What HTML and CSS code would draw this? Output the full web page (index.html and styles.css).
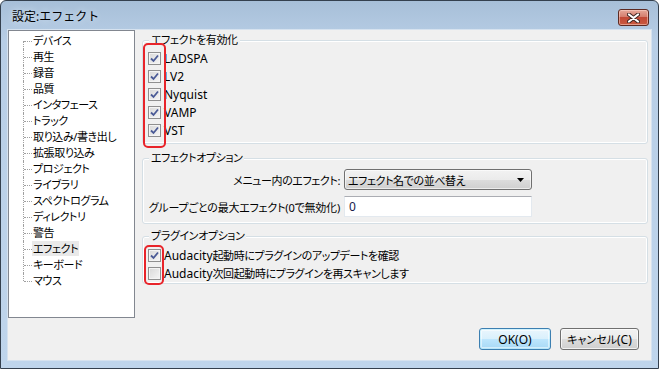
FILE: index.html
```html
<!DOCTYPE html>
<html lang="ja">
<head>
    <meta charset="UTF-8">
    <title>設定:エフェクト</title>
    <link rel="stylesheet" href="styles.css">
</head>
<body>
    <div class="window">
        <div class="titlebar">
            <span class="title">設定:エフェクト</span>
            <button class="close">
                <svg width="13" height="10" viewBox="0 0 13 10">
                    <path d="M2 1.5 L11 8.5 M11 1.5 L2 8.5" stroke="#3c2420" stroke-width="4" stroke-linecap="round"/>
                    <path d="M2 1.5 L11 8.5 M11 1.5 L2 8.5" stroke="#ffffff" stroke-width="2.2" stroke-linecap="round"/>
                </svg>
            </button>
        </div>
        <div class="client">
            <div class="main">
                <ul class="tree">
                    <li>デバイス</li>
                    <li>再生</li>
                    <li>録音</li>
                    <li>品質</li>
                    <li>インタフェース</li>
                    <li>トラック</li>
                    <li>取り込み/書き出し</li>
                    <li>拡張取り込み</li>
                    <li>プロジェクト</li>
                    <li>ライブラリ</li>
                    <li>スペクトログラム</li>
                    <li>ディレクトリ</li>
                    <li>警告</li>
                    <li><span class="selected">エフェクト</span></li>
                    <li>キーボード</li>
                    <li>マウス</li>
                </ul>
                <div class="panel">
                    <div class="group group-enable">
                        <div class="group-title">エフェクトを有効化</div>
                        <div class="checks">
                            <div class="check"><span class="box"><svg width="11" height="11" viewBox="0 0 11 11"><path d="M2 5.5 L4.5 8 L9 2.5" fill="none" stroke="#4a5a96" stroke-width="1.8"/></svg></span><span class="latin">LADSPA</span></div>
                            <div class="check"><span class="box"><svg width="11" height="11" viewBox="0 0 11 11"><path d="M2 5.5 L4.5 8 L9 2.5" fill="none" stroke="#4a5a96" stroke-width="1.8"/></svg></span><span class="latin">LV2</span></div>
                            <div class="check"><span class="box"><svg width="11" height="11" viewBox="0 0 11 11"><path d="M2 5.5 L4.5 8 L9 2.5" fill="none" stroke="#4a5a96" stroke-width="1.8"/></svg></span><span class="latin">Nyquist</span></div>
                            <div class="check"><span class="box"><svg width="11" height="11" viewBox="0 0 11 11"><path d="M2 5.5 L4.5 8 L9 2.5" fill="none" stroke="#4a5a96" stroke-width="1.8"/></svg></span><span class="latin">VAMP</span></div>
                            <div class="check"><span class="box"><svg width="11" height="11" viewBox="0 0 11 11"><path d="M2 5.5 L4.5 8 L9 2.5" fill="none" stroke="#4a5a96" stroke-width="1.8"/></svg></span><span class="latin">VST</span></div>
                        </div>
                        <div class="mark mark-enable"></div>
                    </div>

                    <div class="group group-options">
                        <div class="group-title">エフェクトオプション</div>
                        <div class="form">
                            <span class="form-label">メニュー内のエフェクト:</span>
                            <div class="combo">
                                <span>エフェクト名での並べ替え</span>
                                <svg width="7" height="4" viewBox="0 0 7 4"><path d="M0 0 H7 L3.5 4 Z" fill="#000"/></svg>
                            </div>
                            <span class="form-label form-label-long">グループごとの最大エフェクト(0で無効化)</span>
                            <div class="field"><span class="latin">0</span></div>
                        </div>
                    </div>

                    <div class="group group-plugins">
                        <div class="group-title">プラグインオプション</div>
                        <div class="checks">
                            <div class="check"><span class="box"><svg width="11" height="11" viewBox="0 0 11 11"><path d="M2 5.5 L4.5 8 L9 2.5" fill="none" stroke="#4a5a96" stroke-width="1.8"/></svg></span><span><span class="latin">Audacity</span>起動時にプラグインのアップデートを確認</span></div>
                            <div class="check"><span class="box"></span><span><span class="latin">Audacity</span>次回起動時にプラグインを再スキャンします</span></div>
                        </div>
                        <div class="mark mark-plugins"></div>
                    </div>
                </div>
            </div>
            <div class="footer">
                <button class="btn btn-default"><span class="latin">OK(O)</span></button>
                <button class="btn">キャンセル<span class="latin">(C)</span></button>
            </div>
        </div>
    </div>
</body>
</html>
```

FILE: styles.css
```css
body {
    margin: 0;
    font-family: "Noto Sans", "Noto Sans CJK JP", sans-serif;
    font-size: 11px;
    letter-spacing: -0.4px;
    font-feature-settings: "palt";
    color: #000;
    background: #fff;
}
.latin {
    font-size: 12px;
    letter-spacing: 0;
}
.window {
    width: 659px;
    height: 369px;
    box-sizing: border-box;
    border: 1px solid #34404e;
    border-radius: 6px 6px 0 0;
    background: linear-gradient(to bottom, #a7bfd8, #b8cee6 40px, #bfd5ec);
    display: flex;
    flex-direction: column;
}
.titlebar {
    height: 29px;
    display: flex;
    justify-content: space-between;
    align-items: flex-start;
}
.title {
    margin: 8px 0 0 11px;
    font-size: 12px;
    letter-spacing: 0;
    font-feature-settings: normal;
    line-height: 15px;
    text-shadow: 0 0 6px #e6f0fa;
}
.close {
    margin: 8px 9px 0 0;
    width: 31px;
    height: 17px;
    padding: 0;
    border: 1px solid #5d2a22;
    border-radius: 3px;
    background: linear-gradient(to bottom, #e6a899, #d57e6e 45%, #c24a37 50%, #c9593f);
    box-shadow: inset 0 0 0 1px rgba(255, 220, 210, 0.5);
    display: flex;
    align-items: center;
    justify-content: center;
}
.client {
    margin: 0 7px;
    height: 330px;
    background: #f0f0f0;
    box-shadow: 0 0 0 1px #d6e2ef;
    display: flex;
    flex-direction: column;
}
.main {
    height: 288px;
    display: flex;
}
.tree {
    list-style: none;
    margin: 0;
    padding: 2px 0 0;
    width: 127px;
    box-sizing: border-box;
    background: #fff;
    border: 1px solid #828790;
}
.tree li {
    position: relative;
    height: 16px;
    line-height: 16px;
    padding-left: 24px;
    white-space: nowrap;
}
.tree li::before {
    content: "";
    position: absolute;
    left: 14px;
    top: 0;
    height: 16px;
    border-left: 1px dotted #a0a0a0;
}
.tree li:first-child::before {
    top: 8px;
    height: 8px;
}
.tree li:last-child::before {
    height: 8px;
}
.tree li::after {
    content: "";
    position: absolute;
    left: 15px;
    top: 8px;
    width: 8px;
    border-top: 1px dotted #a0a0a0;
}
.tree .selected {
    background: #e9e9e9;
    display: inline-block;
    line-height: 15px;
    padding: 0 1px;
    margin-left: -1px;
}
.panel {
    flex: 1;
    padding: 0 3px 0 7px;
}
.group {
    position: relative;
    border: 1px solid #d5dfe5;
    border-radius: 3px;
    box-shadow: inset 0 0 0 1px #fff;
    padding: 0 5px;
}
.group-enable {
    margin-top: 10px;
    padding-bottom: 4px;
}
.group-options {
    margin-top: 14px;
    padding-bottom: 6px;
}
.group-plugins {
    margin-top: 12px;
    padding-bottom: 1px;
}
.group-title {
    width: fit-content;
    height: 14px;
    margin: -8px 0 0 1px;
    padding: 0 2px;
    line-height: 14px;
    background: #f0f0f0;
}
.checks {
    padding-top: 2px;
}
.group-plugins .checks {
    padding-top: 3px;
}
.check {
    height: 18px;
    display: flex;
    align-items: center;
    gap: 3px;
    white-space: nowrap;
}
.box {
    width: 13px;
    height: 13px;
    box-sizing: border-box;
    border: 1px solid #8f8f8f;
    background: linear-gradient(135deg, #d8d8d8, #f6f6f6);
    box-shadow: inset 0 0 0 1px #f4f4f4;
    display: flex;
    align-items: center;
    justify-content: center;
}
.mark {
    position: absolute;
    border: 2px solid #e8242a;
    border-radius: 5px;
    box-sizing: border-box;
}
.mark-enable {
    left: 0;
    top: 2px;
    width: 23px;
    height: 105px;
}
.mark-plugins {
    left: 1px;
    top: 8px;
    width: 20px;
    height: 40px;
}
.form {
    padding-top: 4px;
    display: grid;
    grid-template-columns: 192px 188px;
    column-gap: 4px;
    row-gap: 6px;
    align-items: center;
}
.form-label {
    text-align: right;
    white-space: nowrap;
}
.form-label-long {
    letter-spacing: -0.2px;
}
.combo {
    height: 21px;
    box-sizing: border-box;
    border: 1px solid #707070;
    border-radius: 3px;
    background: linear-gradient(to bottom, #f2f2f2, #ebebeb 50%, #dddddd 50%, #cfcfcf);
    box-shadow: inset 0 0 0 1px rgba(255, 255, 255, 0.6);
    display: flex;
    align-items: center;
    justify-content: space-between;
    padding: 0 7px 0 3px;
    white-space: nowrap;
}
.field {
    height: 21px;
    box-sizing: border-box;
    border: 1px solid #e3e9ef;
    border-top-color: #abadb3;
    background: #fff;
    padding-left: 4px;
    line-height: 19px;
    color: #1a1a4a;
}
.footer {
    flex: 1;
    display: flex;
    justify-content: flex-end;
    align-items: flex-start;
    gap: 9px;
    padding: 10px 12px 0 0;
}
.btn {
    height: 22px;
    width: 79px;
    padding: 0;
    font: inherit;
    border: 1px solid #707070;
    border-radius: 3px;
    background: linear-gradient(to bottom, #f2f2f2, #ebebeb 50%, #dddddd 50%, #cfcfcf);
    box-shadow: inset 0 0 0 1px rgba(255, 255, 255, 0.7);
    color: #000;
}
.btn-default {
    width: 72px;
    border-color: #3c7fb1;
    background: linear-gradient(to bottom, #eaf6fd, #d9f0fc 50%, #bee6fd 50%, #a7d9f5);
    box-shadow: inset 0 0 0 1px #48d4fa33, inset 0 0 0 2px rgba(255, 255, 255, 0.5);
}
```
